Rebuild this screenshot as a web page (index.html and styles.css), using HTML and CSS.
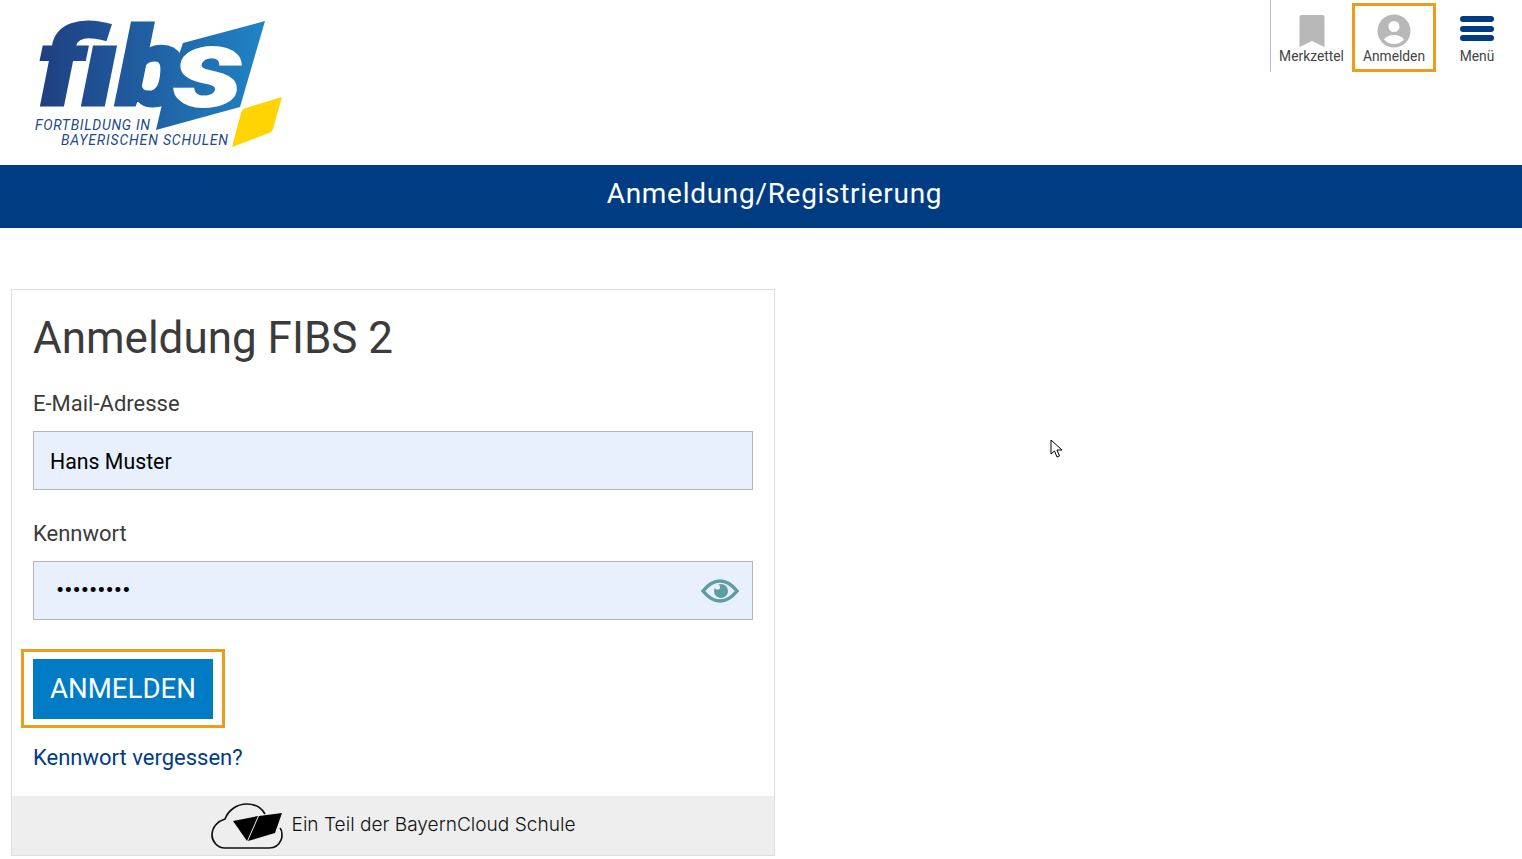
FILE: index.html
```html
<!DOCTYPE html>
<html lang="de">
<head>
    <title>FIBS Anmeldung</title>
    <meta charset="utf-8">
    <meta name="viewport" content="width=device-width, initial-scale=1.0">
    <link rel="stylesheet" href="styles.css">
</head>
<body>
    <header class="site-header">
        <a class="logo" href="#" aria-label="FIBS">
            <svg width="300" height="165" viewBox="0 0 300 165">
                <defs>
                    <linearGradient id="logo-blue" gradientUnits="userSpaceOnUse" x1="38" y1="0" x2="266" y2="0">
                        <stop offset="0" stop-color="#1f3e80"/>
                        <stop offset="1" stop-color="#2084c6"/>
                    </linearGradient>
                </defs>
                <polygon points="183,43 265,21 240,107 156,130 163,100" fill="url(#logo-blue)"/>
                <text class="logo-fib" x="38" y="105" textLength="148" lengthAdjust="spacingAndGlyphs" fill="url(#logo-blue)" stroke="url(#logo-blue)">fib</text>
                <text class="logo-s" x="174" y="107" textLength="70" lengthAdjust="spacingAndGlyphs">s</text>
                <path d="M282 97 L273 129 Q272 132 269 133 L232 147 L241 113 Q242 109 246 108 Z" fill="#ffd400"/>
                <text class="logo-sub" x="35" y="130" textLength="115">FORTBILDUNG IN</text>
                <text class="logo-sub" x="61" y="144.500" textLength="167">BAYERISCHEN SCHULEN</text>
            </svg>
        </a>
        <nav class="top-nav">
            <a class="nav-item nav-first" href="#">
                <svg width="26" height="34" viewBox="0 0 26 34"><path d="M0.500 3 Q0.500 1 2.500 1 H23.500 Q25.500 1 25.500 3 V33 L13 27 L0.500 33 Z" fill="#b8b8b8"/></svg>
                <span>Merkzettel</span>
            </a>
            <a class="nav-item nav-active" href="#">
                <svg width="34" height="34" viewBox="0 0 34 34">
                    <circle cx="17" cy="17" r="16.5" fill="#b8b8b8"/>
                    <circle cx="17" cy="12.500" r="5.500" fill="#fff"/>
                    <path d="M7 25.500 Q10 21 17 21 Q24 21 27 25.500 Q23 30 17 30 Q11 30 7 25.500 Z" fill="#fff"/>
                </svg>
                <span>Anmelden</span>
            </a>
            <a class="nav-item" href="#">
                <svg width="34" height="34" viewBox="0 0 34 34">
                    <rect y="2" width="34" height="6" rx="3" fill="#003c82"/>
                    <rect y="12" width="34" height="6" rx="3" fill="#003c82"/>
                    <rect y="21" width="34" height="6" rx="3" fill="#003c82"/>
                </svg>
                <span>Menü</span>
            </a>
        </nav>
    </header>

    <div class="banner">Anmeldung/Registrierung</div>

    <main class="login-card">
        <div class="login-body">
            <h1>Anmeldung FIBS 2</h1>
            <label for="email">E-Mail-Adresse</label>
            <input id="email" class="field" type="text" value="Hans Muster">
            <label for="password" class="label-pw">Kennwort</label>
            <div class="pw-wrap">
                <input id="password" class="field field-pw" type="password" value="123456789">
                <svg class="eye" width="38" height="28" viewBox="0 0 38 28">
                    <path d="M2 14 Q10 4 19 4 Q28 4 36 14 Q28 24 19 24 Q10 24 2 14 Z" fill="none" stroke="#5f9ea0" stroke-width="3.600"/>
                    <circle cx="20" cy="14" r="7" fill="#5f9ea0"/>
                    <circle cx="16.500" cy="10" r="2.600" fill="#e8f0fe"/>
                </svg>
            </div>
            <div class="btn-focus"><button class="button" type="button">ANMELDEN</button></div>
            <a class="forgot" href="#">Kennwort vergessen?</a>
        </div>
        <footer class="card-foot">
            <svg width="72" height="46" viewBox="0 0 72 46">
                <path d="M69 25 C72 28 71 35 70 37 C68 42 64 45 58 45 H14 C6 45 1 38 1 32 C1 24 7 18 14 16 C17 8 25 1 36 1 C43 1 50 4 54 11" fill="none" stroke="#111" stroke-width="1.700"/>
                <path d="M22 18 L47 13 L36 38 Z" fill="#000"/>
                <path d="M48 13 L71 10 L64 30 L37 38 Z" fill="#000"/>
            </svg>
            <span>Ein Teil der BayernCloud Schule</span>
        </footer>
    </main>

    <svg class="cursor" width="14" height="20" viewBox="0 0 14 20">
        <path d="M1 1 V15 L4.500 12 L7 18 L9.500 17 L7 11 H12 Z" fill="#fff" stroke="#000" stroke-width="1"/>
    </svg>
</body>
</html>
```

FILE: styles.css
```css
body {
    font-family: Roboto, Arial, sans-serif;
    background-color: #fff;
    color: #3b3b3b;
    margin: 0;
    padding: 0;
    overflow: hidden;
}
.site-header {
    display: flex;
    justify-content: space-between;
    align-items: flex-start;
    height: 165px;
}
.logo {
    display: block;
    height: 165px;
}
.logo-fib {
    font-family: Roboto, sans-serif;
    font-style: italic;
    font-weight: 900;
    font-size: 110px;
    stroke-width: 3px;
}
.logo-s {
    font-family: Roboto, sans-serif;
    font-style: italic;
    font-weight: 900;
    font-size: 112px;
    fill: #fff;
}
.logo-sub {
    font-family: Roboto, Arial, sans-serif;
    font-style: italic;
    font-size: 14px;
    fill: #1e4a87;
}
.top-nav {
    display: flex;
    align-items: flex-start;
    padding-right: 4px;
}
.nav-item {
    display: flex;
    flex-direction: column;
    align-items: center;
    width: 82px;
    height: 72px;
    box-sizing: border-box;
    padding-top: 14px;
    font-size: 13.8px;
    color: #444;
    text-decoration: none;
}
.nav-first {
    border-left: 1px solid #bbb;
}
.nav-active {
    width: 84px;
    height: 69px;
    margin-top: 3px;
    padding-top: 8px;
    border: 3px solid #ee9c1c;
}
.banner {
    background-color: #003c82;
    color: #fff;
    height: 63px;
    line-height: 58px;
    font-size: 28px;
    letter-spacing: 0.7px;
    padding-left: 27px;
    text-align: center;
}
.login-card {
    width: 764px;
    box-sizing: border-box;
    margin: 61px 0 0 11px;
    border: 1px solid #ddd;
}
.login-body {
    padding: 21px 21px 0;
}
h1 {
    margin: 0;
    font-size: 44px;
    font-weight: 400;
    line-height: 54px;
}
label {
    display: block;
    margin-top: 25px;
    font-size: 22px;
    line-height: 27px;
}
.label-pw {
    margin-top: 30px;
}
.field {
    display: block;
    width: 100%;
    height: 59px;
    box-sizing: border-box;
    margin-top: 14px;
    padding: 2px 16px 0;
    border: 1px solid #b5b5b5;
    background-color: #e8f0fe;
    font-family: Roboto, Arial, sans-serif;
    font-size: 21.3px;
    color: #000;
}
.field-pw {
    padding: 0 16px 2px 22px;
    font-size: 24.5px;
}
.pw-wrap {
    position: relative;
}
.eye {
    position: absolute;
    right: 14px;
    top: 16px;
}
.btn-focus {
    width: 204px;
    height: 79px;
    box-sizing: border-box;
    margin: 29px 0 0 -12px;
    padding: 7px 9px;
    border: 3px solid #ee9c1c;
}
.button {
    display: block;
    width: 180px;
    height: 60px;
    border: none;
    background-color: #007bc4;
    color: #fff;
    font-family: Roboto, Arial, sans-serif;
    font-size: 27.6px;
    padding: 0 0 2px;
    cursor: pointer;
}
.forgot {
    display: block;
    margin-top: 16px;
    font-size: 22px;
    line-height: 27px;
    color: #003c82;
    text-decoration: none;
}
.card-foot {
    display: flex;
    align-items: center;
    justify-content: center;
    gap: 9px;
    height: 59px;
    margin-top: 25px;
    background-color: #eee;
    color: #111;
    font-family: Inter, sans-serif;
    font-size: 19.1px;
    font-weight: 300;
}
.card-foot span {
    margin-bottom: 3px;
}
.cursor {
    position: absolute;
    left: 1050px;
    top: 439px;
}
```
